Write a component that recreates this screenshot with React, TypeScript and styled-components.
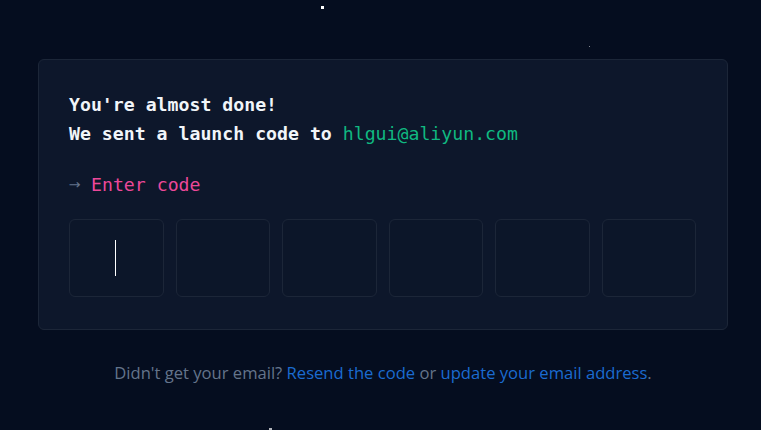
import React from "react";
import styled, { createGlobalStyle } from "styled-components";

const Global = createGlobalStyle`
  html, body { margin: 0; padding: 0; background: #050d1f; }
  body { width: 761px; height: 430px; overflow: hidden; }
`;

const Page = styled.main`
  position: relative;
  width: 761px;
  height: 430px;
  background: #050d1f;
  padding: 59px 33px 0 38px;
  box-sizing: border-box;
  display: flex;
  flex-direction: column;
`;

const Star = styled.span<{ $size: number; $op: number }>`
  position: absolute;
  width: ${(p) => p.$size}px;
  height: ${(p) => p.$size}px;
  background: #fff;
  opacity: ${(p) => p.$op};
`;

const Card = styled.section`
  background: #0d172b;
  border: 1px solid #1c2638;
  border-radius: 6px;
  padding: 30px 31px 31px 30px;
  height: 271px;
  box-sizing: border-box;
  font-family: "DejaVu Sans Mono", "Liberation Mono", monospace;
`;

const Heading = styled.p`
  margin: 0;
  font-size: 18.2px;
  line-height: 29px;
  font-weight: 700;
  color: #f1f5f9;
`;

const Email = styled.span`
  color: #10b981;
  font-weight: 400;
`;

const Prompt = styled.p`
  margin: 22px 0 0;
  font-size: 18.2px;
  line-height: 29px;
  color: #ec4899;
  display: flex;
  align-items: center;
  gap: 11px;
`;

const Arrow = styled.span`
  color: #64748b;
  font-family: "DejaVu Sans", sans-serif;
  font-size: 13px;
  width: 11px;
  transform: scaleX(1.1);
`;

const Boxes = styled.div`
  margin-top: 20px;
  display: grid;
  grid-template-columns: repeat(6, 1fr);
  gap: 12px;
`;

const Box = styled.div`
  height: 78px;
  border: 1px solid #1c2638;
  border-radius: 6px;
  box-sizing: border-box;
  background: #0c1629;
  display: flex;
  align-items: center;
  justify-content: center;
`;

const Caret = styled.span`
  width: 1px;
  height: 36px;
  background: #ffffff;
  margin-right: 2px;
`;

const Footer = styled.p`
  margin: 32px 0 0;
  text-align: center;
  font-family: "Open Sans", "Noto Sans", sans-serif;
  font-size: 16.6px;
  line-height: 22px;
  color: #64748b;
`;

const Link = styled.a`
  color: #1b6bd0;
  text-decoration: none;
`;

export default function App() {
  return (
    <>
      <Global />
      <Page>
        <Star $size={3} $op={1} style={{ left: 321, top: 6 }} />
        <Star $size={1} $op={0.5} style={{ left: 589, top: 46 }} />
        <Star $size={3} $op={0.7} style={{ left: 269, top: 428 }} />
        <Card>
          <Heading>You're almost done!</Heading>
          <Heading>
            We sent a launch code to <Email>hlgui@aliyun.com</Email>
          </Heading>
          <Prompt>
            <Arrow>→</Arrow>
            Enter code
          </Prompt>
          <Boxes>
            <Box>
              <Caret />
            </Box>
            <Box />
            <Box />
            <Box />
            <Box />
            <Box />
          </Boxes>
        </Card>
        <Footer>
          Didn't get your email? <Link href="#">Resend the code</Link> or{" "}
          <Link href="#">update your email address</Link>.
        </Footer>
      </Page>
    </>
  );
}
